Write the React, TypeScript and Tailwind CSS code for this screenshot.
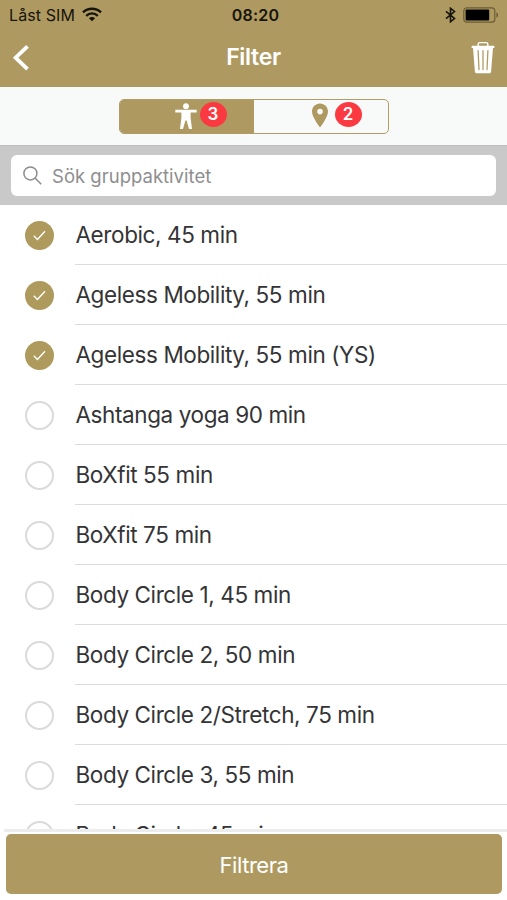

import { useState } from 'react'
import { clsx } from 'clsx'

interface Activity {
  id:   number
  name: string
}

const ACTIVITIES: Activity[] = [
  { id: 1,  name: 'Aerobic, 45 min' },
  { id: 2,  name: 'Ageless Mobility, 55 min' },
  { id: 3,  name: 'Ageless Mobility, 55 min (YS)' },
  { id: 4,  name: 'Ashtanga yoga 90 min' },
  { id: 5,  name: 'BoXfit 55 min' },
  { id: 6,  name: 'BoXfit 75 min' },
  { id: 7,  name: 'Body Circle 1, 45 min' },
  { id: 8,  name: 'Body Circle 2, 50 min' },
  { id: 9,  name: 'Body Circle 2/Stretch, 75 min' },
  { id: 10, name: 'Body Circle 3, 55 min' },
  { id: 11, name: 'Body Circle, 45 min' },
]

// ─── ICONS ────────────────────────────────────────────────────────────────────

function WifiIcon() {
  return (
    <svg width="20" height="15" viewBox="0 0 20 15" fill="none" stroke="#17140c" strokeWidth="2.4">
      <path d="M1 5.4C6 .6 14 .6 19 5.4" />
      <path d="M4.2 8.8c3.3-3.2 8.3-3.2 11.6 0" />
      <path d="M10 14.3 6.9 11.2c1.8-1.7 4.4-1.7 6.2 0Z" fill="#17140c" stroke="none" />
    </svg>
  )
}

function BluetoothIcon() {
  return (
    <svg width="11" height="16" viewBox="0 0 11 16" fill="none" stroke="#17140c" strokeWidth="1.6">
      <path d="m1 4.3 8.5 7.2-4 3.2V1.3l4 3.2L1 11.7" />
    </svg>
  )
}

function BatteryIcon() {
  return (
    <svg width="36" height="16" viewBox="0 0 36 16">
      <rect x=".8" y=".8" width="31" height="14.4" rx="3" fill="none" stroke="#6b5c36" strokeWidth="1.2" />
      <rect x="2.6" y="2.6" width="23.6" height="10.8" rx="1" fill="#000" />
      <path d="M33.4 5.4c2.2.6 2.2 4.6 0 5.2Z" fill="#6b5c36" />
    </svg>
  )
}

function TrashIcon() {
  return (
    <svg width="24" height="33" viewBox="0 0 24 33" fill="none">
      <path d="M7.2 5V3c0-1 .6-1.4 1.6-1.4h6.4c1 0 1.6.4 1.6 1.4v2" stroke="#fff" strokeWidth="1.4" />
      <path d="M1.6 4.8h20.8c.6 0 1 .4 1 1V7H.6V5.8c0-.6.4-1 1-1Z" fill="#fff" />
      <path d="M2 6.8h20l-1.9 23.6c-.1 1.2-.9 1.8-2 1.8H5.9c-1.1 0-1.9-.6-2-1.8Z" fill="#fff" />
      <path d="m7.1 9.7.9 18.8M12 9.7v18.8M16.9 9.7 16 28.5" stroke="#b09c61" strokeWidth="1.3" strokeLinecap="round" />
    </svg>
  )
}

function PersonIcon() {
  return (
    <svg width="22" height="27" viewBox="0 0 22 27" fill="currentColor">
      <circle cx="11" cy="3.2" r="2.9" />
      <path d="M.3 6.8h21.4v2.6h-6.1v5.4L17 26h-3l-2.4-8.4h-1.2L8 26H5l1.4-11.2V9.4H.3Z" />
    </svg>
  )
}

function PinIcon() {
  return (
    <svg width="18" height="25" viewBox="0 0 18 25" fill="currentColor">
      <path fillRule="evenodd" d="M9 .4C4.4.4 1 4 1 8.5 1 14.4 9 24.4 9 24.4s8-10 8-15.9C17 4 13.6.4 9 .4Zm0 5.4a2.8 2.8 0 1 1 0 5.6 2.8 2.8 0 0 1 0-5.6Z" />
    </svg>
  )
}

// ─── PARTS ────────────────────────────────────────────────────────────────────

function Badge({ count }: { count: number }) {
  return (
    <span className="flex h-[25px] w-[27px] items-center justify-center rounded-[50%] bg-[#fa3a40] pt-px text-[17px] font-semibold text-white">
      {count}
    </span>
  )
}

function StatusBar() {
  return (
    <div className="grid h-7 grid-cols-3 items-center pl-[9px] pr-2 pt-px text-[#17140c]">
      <div className="flex items-center gap-[7px]">
        <span className="text-[16px] tracking-[0.1px]">Låst SIM</span>
        <WifiIcon />
      </div>
      <span className="pl-[3px] text-center text-[16px] font-semibold tracking-[0.2px]">08:20</span>
      <div className="flex items-center justify-end gap-[7px]">
        <BluetoothIcon />
        <BatteryIcon />
      </div>
    </div>
  )
}

function ActivityRow({ name, checked, onToggle }: { name: string; checked: boolean; onToggle: () => void }) {
  return (
    <li className="flex h-[60px] pl-[25px]">
      <button onClick={onToggle} className="flex flex-1 items-center gap-[21px] text-left">
        <span
          className={clsx(
            'flex size-[29px] shrink-0 items-center justify-center rounded-full',
            checked ? 'bg-[#ae9a5d]' : 'border-2 border-[#dadada]',
          )}
        >
          {checked && (
            <svg width="13" height="11" viewBox="0 0 13 11" fill="none" stroke="#fff" strokeWidth="1.4">
              <path d="m.8 5.8 3.6 3.6L12 1.3" />
            </svg>
          )}
        </span>
        <span className="flex h-full flex-1 items-center border-b border-[#dcdcdd] pl-[0.5px] text-[22.5px] tracking-[-0.4px] whitespace-nowrap text-[#343436]">
          {name}
        </span>
      </button>
    </li>
  )
}

// ─── SCREEN ───────────────────────────────────────────────────────────────────

export default function App() {
  const [selected, setSelected] = useState<number[]>([1, 2, 3])
  const [tab, setTab]           = useState<'activity' | 'location'>('activity')
  const [query, setQuery]       = useState('')

  function toggle(id: number) {
    setSelected((prev) => (prev.includes(id) ? prev.filter((x) => x !== id) : [...prev, id]))
  }

  const visible = ACTIVITIES.filter((a) => a.name.toLowerCase().includes(query.toLowerCase()))

  return (
    <div className="flex h-[900px] w-[507px] flex-col overflow-hidden bg-white font-['Inter',sans-serif]">
      <header className="h-[87px] shrink-0 bg-[#ae9a61]">
        <StatusBar />
        <div className="grid h-[58px] grid-cols-3 items-center pl-[12px] pr-[12px] text-white">
          <button aria-label="Tillbaka">
            <svg width="17" height="27" viewBox="0 0 17 27" fill="none" stroke="#fff" strokeWidth="3.8">
              <path d="M15.5 2.3 3.6 13.7l11.9 11.4" />
            </svg>
          </button>
          <h1 className="text-center text-[23px] font-semibold tracking-[-0.3px]">Filter</h1>
          <button aria-label="Rensa" className="justify-self-end">
            <TrashIcon />
          </button>
        </div>
      </header>

      <div className="flex h-[58px] shrink-0 items-center justify-center bg-[#f8f9f9]">
        <div className="flex h-[35px] w-[270px] overflow-hidden rounded-[5px] border-[1.5px] border-[#b09d66]">
          <button
            onClick={() => setTab('activity')}
            className={clsx(
              'flex w-[134px] items-start gap-[3px] pl-[55px] pt-[2px]',
              tab === 'activity' ? 'bg-[#ae9a61] text-white' : 'text-[#ae9a61]',
            )}
          >
            <span className="pt-px">
              <PersonIcon />
            </span>
            <Badge count={3} />
          </button>
          <button
            onClick={() => setTab('location')}
            className={clsx(
              'flex flex-1 items-start gap-[6px] pl-[57px] pt-[2px]',
              tab === 'location' ? 'bg-[#ae9a61] text-white' : 'text-[#ae9a61]',
            )}
          >
            <span className="pt-px">
              <PinIcon />
            </span>
            <Badge count={2} />
          </button>
        </div>
      </div>

      <div className="h-[60px] shrink-0 border-t border-[#bebebf] bg-[#c9c9ca] px-[11px] pt-[9px]">
        <label className="flex h-[41px] items-center gap-[10px] rounded-[6px] bg-white pl-[12px]">
          <svg width="19" height="19" viewBox="0 0 19 19" fill="none" stroke="#8c8c8e" strokeWidth="1.5">
            <circle cx="7.4" cy="7.4" r="6.5" />
            <path d="m12 12 6.2 6.2" />
          </svg>
          <input
            value={query}
            onChange={(e) => setQuery(e.target.value)}
            placeholder="Sök gruppaktivitet"
            className="flex-1 pt-[2px] text-[18.5px] tracking-[0.01px] text-[#343436] outline-none placeholder:text-[#8e8e90]"
          />
        </label>
      </div>

      <ul className="min-h-0 flex-1 overflow-hidden">
        {visible.map((a) => (
          <ActivityRow key={a.id} name={a.name} checked={selected.includes(a.id)} onToggle={() => toggle(a.id)} />
        ))}
      </ul>

      <footer className="ml-1 h-[71px] shrink-0 border-t-[3px] border-[#ececed] pl-[2px] pr-[5px] pt-[2px]">
        <button className="h-[60px] w-full rounded-[5px] bg-[#ae9a61] pt-[2px] text-[22px] tracking-[-0.45px] text-white">
          Filtrera
        </button>
      </footer>
    </div>
  )
}
